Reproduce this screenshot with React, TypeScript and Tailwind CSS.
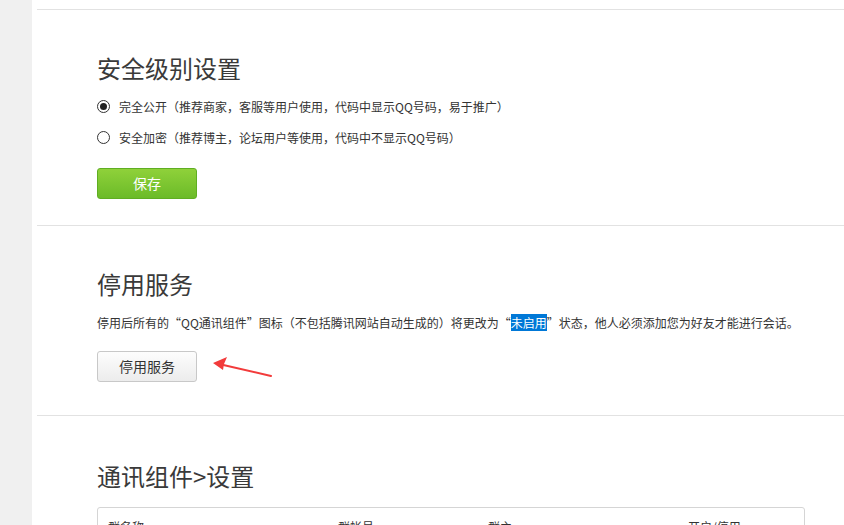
import React from "react";

const font = { fontFamily: '"Microsoft YaHei", "Noto Sans CJK SC", "Noto Sans", sans-serif' };

function Radio({ checked }: { checked?: boolean }) {
  return (
    <span className="flex h-[13px] w-[13px] shrink-0 items-center justify-center rounded-full border border-[#333] bg-white">
      {checked && <span className="h-[7px] w-[7px] rounded-full bg-[#222]" />}
    </span>
  );
}

export default function App() {
  return (
    <div className="flex h-[525px] w-[844px] overflow-hidden bg-white text-[#333]" style={font}>
      <div className="w-[32px] shrink-0 bg-[#f0f0f0]" />
      <div className="flex-1 pl-[5px]">
        <div className="mt-[9px] border-t border-[#e2e2e2]" />
        <section className="pl-[60px] pt-[42px] pb-[26px]">
          <h2 className="text-[24px] leading-[32px] text-[#3a3a3a]">安全级别设置</h2>
          <div className="mt-[7px] flex h-[31px] items-center gap-[9px] text-[12px]">
            <Radio checked />
            <span>完全公开（推荐商家，客服等用户使用，代码中显示QQ号码，易于推广）</span>
          </div>
          <div className="flex h-[31px] items-center gap-[9px] text-[12px]">
            <Radio />
            <span>安全加密（推荐博主，论坛用户等使用，代码中不显示QQ号码）</span>
          </div>
          <button className="mt-[15px] flex h-[31px] w-[100px] items-center justify-center rounded-[3px] border border-[#5fae22] bg-gradient-to-b from-[#8fd13a] to-[#6bbb28] text-[14px] text-white">
            保存
          </button>
        </section>
        <div className="border-t border-[#e2e2e2]" />
        <section className="relative pl-[60px] pt-[42px] pb-[33px]">
          <h2 className="text-[24px] leading-[32px] text-[#3a3a3a]">停用服务</h2>
          <p className="mt-[14px] text-[12px] leading-[18px]">
            停用后所有的“QQ通讯组件”图标（不包括腾讯网站自动生成的）将更改为“
            <span className="bg-[#0078d7] text-white">未启用</span>”状态，他人必须添加您为好友才能进行会话。
          </p>
          <button className="mt-[19px] flex h-[31px] w-[100px] items-center justify-center rounded-[3px] border border-[#c8c8c8] bg-gradient-to-b from-[#fdfdfd] to-[#ececec] text-[14px] text-[#333]">
            停用服务
          </button>
          <svg className="absolute left-[168px] top-[129px]" width="72" height="24" viewBox="0 0 72 24">
            <path d="M66 21 L14 9" stroke="#f23b3b" strokeWidth="2" strokeLinecap="round" />
            <path d="M8 8 L22 2 L19 9 L18 15 Z" fill="#f23b3b" />
          </svg>
        </section>
        <div className="border-t border-[#e2e2e2]" />
        <section className="pl-[60px] pt-[44px]">
          <h2 className="text-[24px] leading-[32px] text-[#3a3a3a]">通讯组件&gt;设置</h2>
          <div className="mt-[15px] w-[708px] rounded-t-[3px] border border-[#d5d5d5]">
            <div className="grid h-[30px] grid-cols-[230px_150px_200px_1fr] items-center pl-[10px] text-[12px] pt-[8px]">
              <span>群名称</span>
              <span>群帐号</span>
              <span>群主</span>
              <span>开启/停用</span>
            </div>
          </div>
        </section>
      </div>
    </div>
  );
}
